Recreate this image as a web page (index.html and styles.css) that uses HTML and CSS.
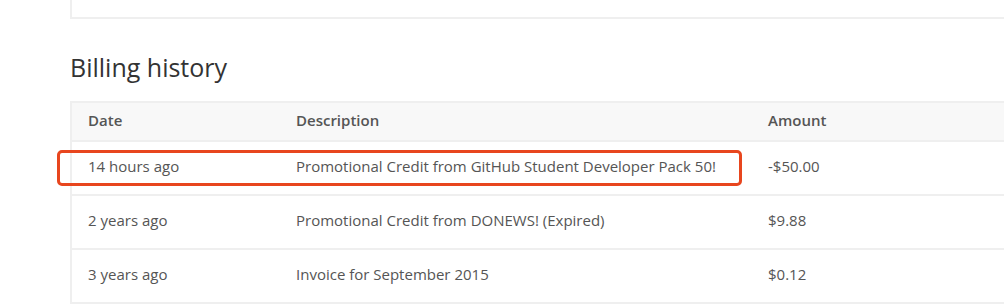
FILE: index.html
```html
<!DOCTYPE html>
<html lang="en">
<head>
    <meta charset="UTF-8">
    <meta name="viewport" content="width=device-width, initial-scale=1.0">
    <title>Billing</title>
    <link rel="stylesheet" href="styles.css">
</head>
<body>
    <div class="page">
        <div class="card-end"></div>

        <h2 class="section-title">Billing history</h2>

        <div class="history">
            <table class="history-table">
                <colgroup>
                    <col class="col-date">
                    <col class="col-desc">
                    <col>
                </colgroup>
                <thead>
                    <tr>
                        <th>Date</th>
                        <th>Description</th>
                        <th>Amount</th>
                    </tr>
                </thead>
                <tbody>
                    <tr>
                        <td>14 hours ago</td>
                        <td>Promotional Credit from GitHub Student Developer Pack 50!</td>
                        <td>-$50.00</td>
                    </tr>
                    <tr>
                        <td>2 years ago</td>
                        <td>Promotional Credit from DONEWS! (Expired)</td>
                        <td>$9.88</td>
                    </tr>
                    <tr>
                        <td>3 years ago</td>
                        <td>Invoice for September 2015</td>
                        <td>$0.12</td>
                    </tr>
                </tbody>
            </table>
            <!-- highlight around the newest entry -->
            <div class="highlight"></div>
        </div>
    </div>
</body>
</html>
```
FILE: styles.css
```css
html, body {
    margin: 0;
    padding: 0;
    background: #fff;
    overflow: hidden;
}
body {
    font-family: "Open Sans", Lato, Arial, sans-serif;
    color: #555;
}
.page {
    padding-left: 70px;
    width: 1000px;
}
.card-end {
    height: 17px;
    border-left: 2px solid #efefef;
    border-bottom: 2px solid #efefef;
}
.section-title {
    margin: 33px 0 0 0;
    font-size: 25px;
    font-weight: 400;
    line-height: 30px;
    color: #333;
}
.history {
    position: relative;
    margin-top: 19px;
}
.history-table {
    width: 100%;
    border-collapse: collapse;
    font-size: 15px;
}
.col-date {
    width: 209px;
}
.col-desc {
    width: 472px;
}
.history-table th,
.history-table td {
    text-align: left;
    padding: 0 0 4px 16px;
    border-top: 2px solid #efefef;
    border-bottom: 2px solid #efefef;
}
.history-table th:first-child,
.history-table td:first-child {
    border-left: 2px solid #efefef;
}
.history-table th {
    height: 33px;
    background: #f8f8f8;
    font-weight: 600;
    color: #555;
}
.history-table td {
    height: 48px;
    color: #555;
}
.highlight {
    position: absolute;
    left: -13px;
    top: 49px;
    width: 679px;
    height: 30px;
    border: 3px solid #e8461e;
    border-radius: 5px;
}
```
